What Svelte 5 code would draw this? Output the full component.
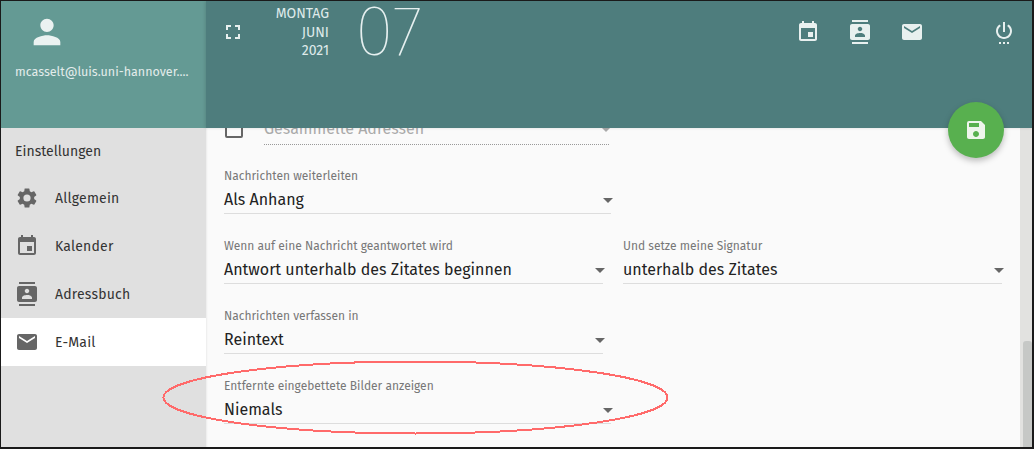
<script>
  const nav = [
    { label: 'Allgemein', icon: 'gear' },
    { label: 'Kalender', icon: 'cal' },
    { label: 'Adressbuch', icon: 'book' },
    { label: 'E-Mail', icon: 'mail', active: true }
  ];
  const paths = {
    gear: 'M19.14 12.94c.04-.3.06-.61.06-.94s-.02-.64-.07-.94l2.03-1.58a.49.49 0 0 0 .12-.61l-1.92-3.32a.49.49 0 0 0-.59-.22l-2.39.96c-.5-.38-1.03-.7-1.62-.94l-.36-2.54a.48.48 0 0 0-.48-.41h-3.84c-.24 0-.43.17-.47.41l-.36 2.54c-.59.24-1.13.57-1.62.94l-2.39-.96a.48.48 0 0 0-.59.22L2.74 8.87c-.12.21-.08.47.12.61l2.03 1.58c-.05.3-.09.63-.09.94s.02.64.07.94l-2.03 1.58a.49.49 0 0 0-.12.61l1.92 3.32c.12.22.37.29.59.22l2.39-.96c.5.38 1.03.7 1.62.94l.36 2.54c.05.24.24.41.48.41h3.84c.24 0 .44-.17.47-.41l.36-2.54c.59-.24 1.13-.56 1.62-.94l2.39.96c.22.08.47 0 .59-.22l1.92-3.32c.12-.22.07-.47-.12-.61l-2.01-1.58zM12 15.6A3.6 3.6 0 1 1 12 8.4a3.6 3.6 0 0 1 0 7.2z',
    cal: 'M17 12h-5v5h5v-5zM16 1v2H8V1H6v2H5c-1.11 0-1.99.9-1.99 2L3 19c0 1.1.89 2 2 2h14c1.1 0 2-.9 2-2V5c0-1.1-.9-2-2-2h-1V1h-2zm3 18H5V8h14v11z',
    book: 'M20 0H4v2h16V0zM4 24h16v-2H4v2zM20 4H4c-1.1 0-2 .9-2 2v12c0 1.1.9 2 2 2h16c1.1 0 2-.9 2-2V6c0-1.1-.9-2-2-2zm-8 2.75c1.24 0 2.25 1.01 2.25 2.25s-1.01 2.25-2.25 2.25S9.75 10.24 9.75 9 10.76 6.75 12 6.75zM17 17H7v-1.5c0-1.67 3.33-2.5 5-2.5s5 .83 5 2.5V17z',
    mail: 'M20 4H4c-1.1 0-1.99.9-1.99 2L2 18c0 1.1.9 2 2 2h16c1.1 0 2-.9 2-2V6c0-1.1-.9-2-2-2zm0 4l-8 5-8-5V6l8 5 8-5v2z',
    power: 'M7 24h2v-2H7v2zm4 0h2v-2h-2v2zm2-22h-2v10h2V2zm3.56 2.44l-1.45 1.45C16.84 6.94 18 8.83 18 11c0 3.31-2.69 6-6 6s-6-2.69-6-6c0-2.17 1.16-4.06 2.88-5.12L7.44 4.44C5.36 5.88 4 8.28 4 11c0 4.42 3.58 8 8 8s8-3.58 8-8c0-2.72-1.36-5.12-3.44-6.56zM15 24h2v-2h-2v2z',
    save: 'M17 3H5a2 2 0 0 0-2 2v14c0 1.1.89 2 2 2h14c1.1 0 2-.9 2-2V7l-4-4zm-5 16c-1.66 0-3-1.34-3-3s1.34-3 3-3 3 1.34 3 3-1.34 3-3 3zm3-10H5V5h10v4z',
    user: 'M12 12c2.21 0 4-1.79 4-4s-1.79-4-4-4-4 1.79-4 4 1.79 4 4 4zm0 2c-2.67 0-8 1.34-8 4v2h16v-2c0-2.66-5.33-4-8-4z',
    full: 'M7 14H5v5h5v-2H7v-3zm-2-4h2V7h3V5H5v5zm12 7h-3v2h5v-5h-2v3zM14 5v2h3v3h2V5h-5z'
  };
  const rows = [
    [{ label: 'Nachrichten weiterleiten', value: 'Als Anhang', cls: 'wide' }],
    [
      { label: 'Wenn auf eine Nachricht geantwortet wird', value: 'Antwort unterhalb des Zitates beginnen', cls: 'half' },
      { label: 'Und setze meine Signatur', value: 'unterhalb des Zitates', cls: 'half' }
    ],
    [{ label: 'Nachrichten verfassen in', value: 'Reintext', cls: 'half' }],
    [{ label: 'Entfernte eingebettete Bilder anzeigen', value: 'Niemals', cls: 'wide' }]
  ];
</script>

{#snippet icon(name, cls)}
  <svg class={cls} viewBox="0 0 24 24" aria-hidden="true"><path d={paths[name]} /></svg>
{/snippet}

<div class="frame">
  <header class="top">
    <div class="account">
      {@render icon('user', 'avatar')}
      <div class="email">mcasselt@luis.uni-hannover....</div>
    </div>
    <div class="bar">
      {@render icon('full', 'full')}
      <div class="date">
        <span>MONTAG</span><span>JUNI</span><span>2021</span>
      </div>
      <div class="day">07</div>
      <div class="apps">
        {@render icon('cal', 'app')}
        {@render icon('book', 'app')}
        {@render icon('mail', 'app')}
      </div>
      {@render icon('power', 'pw')}
    </div>
  </header>
  <div class="body">
    <aside class="side">
      <div class="title">Einstellungen</div>
      {#each nav as n}
        <div class="item" class:active={n.active}>
          {@render icon(n.icon, 'nav-icon')}
          <span>{n.label}</span>
        </div>
      {/each}
    </aside>
    <main class="main">
      <div class="form">
        <div class="check-row">
          <span class="box"></span>
          <div class="disabled">
            <span>Gesammelte Adressen</span>
            <b class="arrow dim"></b>
          </div>
        </div>
        {#each rows as row}
          <div class="row">
            {#each row as f}
              <div class="field {f.cls}">
                <label>{f.label}</label>
                <div class="value"><span>{f.value}</span><b class="arrow"></b></div>
              </div>
            {/each}
          </div>
        {/each}
      </div>
      <div class="track"><div class="thumb"></div></div>
    </main>
  </div>
  <button class="fab" aria-label="Speichern">{@render icon('save', 'fab-icon')}</button>
  <svg class="mark" viewBox="0 0 1034 449" aria-hidden="true">
    <ellipse cx="415.5" cy="397.5" rx="252" ry="36" />
  </svg>
</div>

<style>
  :global(body) { margin: 0; background: #1a1a1a; }
  .frame {
    position: relative;
    width: 1031px;
    height: 446px;
    margin: 1px 0 0 1px;
    overflow: hidden;
    display: flex;
    flex-direction: column;
    font-family: "Fira Sans", "Noto Sans", sans-serif;
    background: #fafafa;
  }
  .top { display: flex; height: 127px; flex: none; color: #e8f0ef; position: relative; z-index: 2; }
  .account {
    width: 205px;
    flex: none;
    background: #649a94;
    box-sizing: border-box;
    padding: 11px 0 0 14px;
  }
  .avatar { width: 40px; height: 40px; fill: #ebf2f1; display: block; margin-left: 12px; }
  .email { font-size: 12.5px; line-height: 16px; margin-top: 12px; color: #e3eceb; white-space: nowrap; }
  .bar {
    flex: 1;
    background: #4e7d7d;
    display: flex;
    align-items: flex-start;
    position: relative;
    box-shadow: -1px 0 3px rgba(0,0,0,.12);
  }
  .full { width: 24px; height: 24px; fill: #e8f0ef; margin: 19px 0 0 15px; flex: none; }
  .date {
    width: 84px;
    display: flex;
    flex-direction: column;
    align-items: flex-end;
    font-size: 14px;
    line-height: 18.5px;
    margin-top: 4px;
    color: #dfeaea;
    flex: none;
  }
  .day {
    font-size: 71px;
    line-height: 50px;
    font-weight: 200;
    margin: 6px 0 0 26px;
    color: #e6f0f0;
    flex: none;
  }
  .apps { display: flex; gap: 28px; position: absolute; left: 590px; top: 19px; }
  .app { width: 24px; height: 24px; fill: #e8f0ef; }
  .pw { width: 24px; height: 24px; fill: #e8f0ef; position: absolute; left: 786px; top: 19px; }
  .body { flex: 1; display: flex; min-height: 0; }
  .side { width: 205px; flex: none; background: #e0e0e0; }
  .title { height: 46px; padding: 15px 0 0 14px; box-sizing: border-box; font-size: 14px; line-height: 18px; color: #333; }
  .item { height: 48px; display: flex; align-items: center; padding-left: 14px; font-size: 14px; color: #333; letter-spacing: .2px; }
  .item.active { background: #fff; }
  .nav-icon { width: 24px; height: 24px; fill: #666; margin-right: 16px; flex: none; }
  .main {
    flex: 1;
    position: relative;
    overflow: hidden;
    box-shadow: inset 2px 0 2px -1px rgba(0,0,0,.06);
    display: flex;
  }
  .form { flex: 1; padding-left: 18px; margin-top: -11px; }
  .check-row { display: flex; height: 38px; align-items: flex-start; }
  .box { width: 14px; height: 14px; border: 2px solid #666; border-radius: 2px; flex: none; margin: 3px 21px 0 1px; }
  .disabled {
    width: 345px;
    height: 28px;
    box-sizing: border-box;
    border-bottom: 1px dotted #999;
    display: flex;
    justify-content: space-between;
    align-items: flex-start;
    font-size: 16px;
    line-height: 24px;
    color: #aaa;
  }
  .disabled .arrow { margin-top: 10px; }
  .row { display: flex; gap: 20px; height: 70px; }
  .field { box-sizing: border-box; padding-top: 13px; }
  .wide { width: 387px; }
  .half { width: 379px; }
  label { display: block; font-size: 12px; line-height: 16px; color: #777; }
  .value {
    display: flex;
    justify-content: space-between;
    align-items: center;
    height: 26px;
    margin-top: 3px;
    border-bottom: 1px solid #ddd;
    font-size: 16px;
    line-height: 24px;
    color: #222;
  }
  .arrow { display: block; width: 0; height: 0; border: 5px solid transparent; border-top-color: #666; border-bottom-width: 0; margin-right: -2px; }
  .arrow.dim { border-top-color: #aaa; }
  .track { width: 12px; flex: none; background: #e2e2e0; position: relative; }
  .thumb { position: absolute; left: 3px; right: 0; top: 213px; bottom: 0; background: #c6c8c6; border-radius: 3px 3px 0 0; }
  .fab {
    position: absolute;
    left: 947px;
    top: 101px;
    width: 56px;
    height: 56px;
    border-radius: 50%;
    border: 0;
    padding: 16px;
    background: #58b04f;
    box-shadow: 0 3px 6px rgba(0,0,0,.25);
    z-index: 3;
  }
  .fab-icon { width: 24px; height: 24px; fill: #eef5ec; display: block; }
  .mark { position: absolute; left: -1px; top: -1px; width: 1034px; height: 449px; pointer-events: none; z-index: 4; }
  .mark ellipse { fill: none; stroke: #ff6a6a; stroke-width: 2; shape-rendering: crispEdges; }
</style>
